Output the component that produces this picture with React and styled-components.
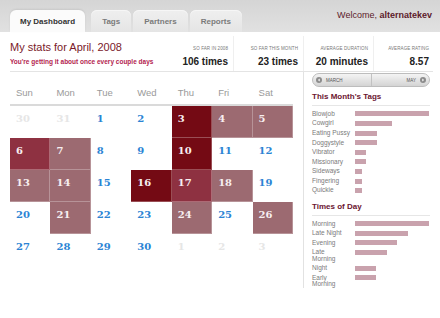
import React from "react";
import styled, { createGlobalStyle } from "styled-components";

const Global = createGlobalStyle`
  html, body { margin: 0; padding: 0; background: #fff; }
  body { font-family: "Liberation Sans", Arial, sans-serif; }
  * { box-sizing: border-box; }
`;

const Page = styled.div`
  width: 440px;
  height: 318px;
  background: #fff;
  overflow: hidden;
`;

const Header = styled.header`
  height: 32px;
  display: flex;
  align-items: flex-end;
  justify-content: space-between;
  padding: 0 8px 0 10px;
  background: linear-gradient(#d5d5d5, #e1e1e1);
`;

const Tabs = styled.nav`
  display: flex;
  align-items: flex-end;
  gap: 2px;
`;

const Tab = styled.div`
  height: 22px;
  padding: 0 ${(p) => (p.$active ? 10 : 11)}px;
  display: flex;
  align-items: center;
  justify-content: center;
  border-radius: 6px 6px 0 0;
  font-size: 8px;
  font-weight: bold;
  color: ${(p) => (p.$active ? "#333" : "#7a7a7a")};
  background: ${(p) => (p.$active ? "#fbfbfb" : "linear-gradient(#efefef, #e5e5e5)")};
  margin-right: ${(p) => (p.$active ? "4px" : "0")};
  box-shadow: ${(p) => (p.$active ? "0 -1px 2px rgba(0,0,0,0.08)" : "inset 0 1px 0 #f6f6f6")};
`;

const Welcome = styled.div`
  align-self: center;
  margin-top: -2px;
  font-size: 9px;
  color: #5c1a2a;
  b { font-weight: bold; }
`;

const StatsBar = styled.section`
  display: flex;
  height: 40px;
  margin: 0 7px 0 10px;
  border-bottom: 1px solid #e4e4e4;
`;

const TitleBlock = styled.div`
  flex: 1;
  padding-top: 9px;
`;

const Title = styled.h1`
  margin: 0;
  font-size: 11px;
  line-height: 13px;
  font-weight: normal;
  color: #7a1a2a;
`;

const Subtitle = styled.p`
  margin: 3.5px 0 0;
  font-size: 6.5px;
  line-height: 8px;
  font-weight: bold;
  color: #b3244f;
`;

const Stat = styled.div`
  width: ${(p) => p.$w || 70}px;
  text-align: right;
  padding: 10px ${(p) => p.$pr || 5}px 0 0;
  margin-top: 4px;
  border-left: ${(p) => (p.$first ? "none" : "1px solid #efefef")};
`;

const StatLabel = styled.div`
  font-size: 4.5px;
  line-height: 6px;
  color: #777;
  text-transform: uppercase;
  letter-spacing: 0.1px;
`;

const StatValue = styled.div`
  margin-top: 3.5px;
  font-size: 10px;
  line-height: 12px;
  font-weight: bold;
  color: #222;
`;

const Main = styled.div`
  display: flex;
  margin: 0 7px 0 10px;
`;

const Calendar = styled.div`
  width: 283px;
`;

const WeekHeader = styled.div`
  display: grid;
  grid-template-columns: repeat(7, 1fr);
  height: 34px;
  align-items: end;
  padding-bottom: 5px;
  border-bottom: 2px solid #dadada;
`;

const DayName = styled.div`
  padding-left: 6px;
  font-size: 9.5px;
  line-height: 12px;
  color: #9a9a9a;
`;

const Grid = styled.div`
  display: grid;
  grid-template-columns: repeat(7, 1fr);
  grid-auto-rows: 32px;
`;

const cellBg = { dark: "#740a14", med: "#8e3141", light: "#9c6a71" };

const Cell = styled.div`
  padding: 7px 0 0 6px;
  font-family: "DejaVu Serif", "Liberation Serif", serif;
  font-weight: bold;
  font-size: 10px;
  line-height: 12px;
  color: ${(p) => (p.$level ? "#f7eef0" : p.$faded ? "#e6e6e6" : "#2b84d4")};
  background: ${(p) => (p.$level ? cellBg[p.$level] : "transparent")};
  box-shadow: ${(p) => (p.$level ? "inset -1px -1px 0 rgba(255,255,255,0.28)" : "none")};
`;

const Sidebar = styled.aside`
  width: 130px;
  height: 216px;
  margin-left: 10px;
  border-left: 1px solid #e2e2e2;
  padding: 1px 3px 0 8px;
`;

const MonthNav = styled.div`
  height: 14px;
  display: flex;
  border: 1px solid #bdbdbd;
  border-radius: 7px;
  background: linear-gradient(#f4f4f4, #d4d4d4);
  overflow: hidden;
`;

const NavHalf = styled.div`
  flex: 1;
  display: flex;
  align-items: center;
  justify-content: ${(p) => (p.$right ? "flex-end" : "flex-start")};
  gap: 4px;
  padding: 0 3px;
  font-size: 4.5px;
  color: #555;
  text-transform: uppercase;
  border-left: ${(p) => (p.$right ? "1px solid #c2c2c2" : "none")};
`;

const SectionTitle = styled.h2`
  margin: ${(p) => p.$mt}px 0 0;
  padding-bottom: 3px;
  border-bottom: 1px solid #e6e6e6;
  font-size: 8px;
  line-height: 10px;
  font-weight: bold;
  color: #6b1530;
`;

const BarList = styled.div`
  margin-top: 3.2px;
`;

const BarRow = styled.div`
  display: flex;
  align-items: flex-start;
  padding: 1.65px 0;
`;

const BarLabel = styled.div`
  width: 43px;
  flex: none;
  font-size: 6.5px;
  line-height: 6.3px;
  color: #7a7a7a;
  white-space: pre-line;
`;

const Bar = styled.div`
  height: 5px;
  margin-top: 0.65px;
  background: #c9a2ad;
`;

function NavIcon({ dir }) {
  return (
    <svg width="6" height="6" viewBox="0 0 6 6">
      <circle cx="3" cy="3" r="3" fill="#8c8c8c" />
      {dir === "left" ? (
        <path d="M3.7 1.6 L1.9 3 L3.7 4.4 Z" fill="#fff" />
      ) : (
        <path d="M2.3 1.6 L4.1 3 L2.3 4.4 Z" fill="#fff" />
      )}
    </svg>
  );
}

const stats = [
  { label: "So far in 2008", value: "106 times", first: true },
  { label: "So far this month", value: "23 times" },
  { label: "Average duration", value: "20 minutes" },
  { label: "Average rating", value: "8.57", w: 60, pr: 4 },
];

const days = ["Sun", "Mon", "Tue", "Wed", "Thu", "Fri", "Sat"];

const weeks = [
  [[30, 0, 1], [31, 0, 1], [1], [2], [3, "dark"], [4, "light"], [5, "light"]],
  [[6, "med"], [7, "light"], [8], [9], [10, "dark"], [11], [12]],
  [[13, "light"], [14, "light"], [15], [16, "dark"], [17, "med"], [18, "light"], [19]],
  [[20], [21, "light"], [22], [23], [24, "light"], [25], [26, "light"]],
  [[27], [28], [29], [30], [1, 0, 1], [2, 0, 1], [3, 0, 1]],
];

const tags = [
  ["Blowjob", 20],
  ["Cowgirl", 10],
  ["Eating Pussy", 6],
  ["Doggystyle", 6],
  ["Vibrator", 3],
  ["Missionary", 3],
  ["Sideways", 2],
  ["Fingering", 2],
  ["Quickie", 2],
];

const times = [
  ["Morning", 7],
  ["Late Night", 5],
  ["Evening", 4],
  ["Late\nMorning", 3],
  ["Night", 2],
  ["Early\nMorning", 2],
];

function BarChart({ data }) {
  const max = Math.max(...data.map((d) => d[1]));
  return (
    <BarList>
      {data.map(([name, n]) => (
        <BarRow key={name}>
          <BarLabel>{name}</BarLabel>
          <Bar style={{ width: `${(n / max) * 74}px` }} />
        </BarRow>
      ))}
    </BarList>
  );
}

export default function App() {
  return (
    <Page>
      <Global />
      <Header>
        <Tabs>
          <Tab $active>My Dashboard</Tab>
          <Tab>Tags</Tab>
          <Tab>Partners</Tab>
          <Tab>Reports</Tab>
        </Tabs>
        <Welcome>
          Welcome, <b>alternatekev</b>
        </Welcome>
      </Header>

      <StatsBar>
        <TitleBlock>
          <Title>My stats for April, 2008</Title>
          <Subtitle>You're getting it about once every couple days</Subtitle>
        </TitleBlock>
        {stats.map((s) => (
          <Stat key={s.label} $first={s.first} $w={s.w} $pr={s.pr}>
            <StatLabel>{s.label}</StatLabel>
            <StatValue>{s.value}</StatValue>
          </Stat>
        ))}
      </StatsBar>

      <Main>
        <Calendar>
          <WeekHeader>
            {days.map((d) => (
              <DayName key={d}>{d}</DayName>
            ))}
          </WeekHeader>
          <Grid>
            {weeks.flat().map(([n, level, faded], i) => (
              <Cell key={i} $level={level || undefined} $faded={!!faded}>
                {n}
              </Cell>
            ))}
          </Grid>
        </Calendar>

        <Sidebar>
          <MonthNav>
            <NavHalf>
              <NavIcon dir="left" />
              March
            </NavHalf>
            <NavHalf $right>
              May
              <NavIcon dir="right" />
            </NavHalf>
          </MonthNav>
          <SectionTitle $mt={5}>This Month's Tags</SectionTitle>
          <BarChart data={tags} />
          <SectionTitle $mt={6.4}>Times of Day</SectionTitle>
          <BarChart data={times} />
        </Sidebar>
      </Main>
    </Page>
  );
}
